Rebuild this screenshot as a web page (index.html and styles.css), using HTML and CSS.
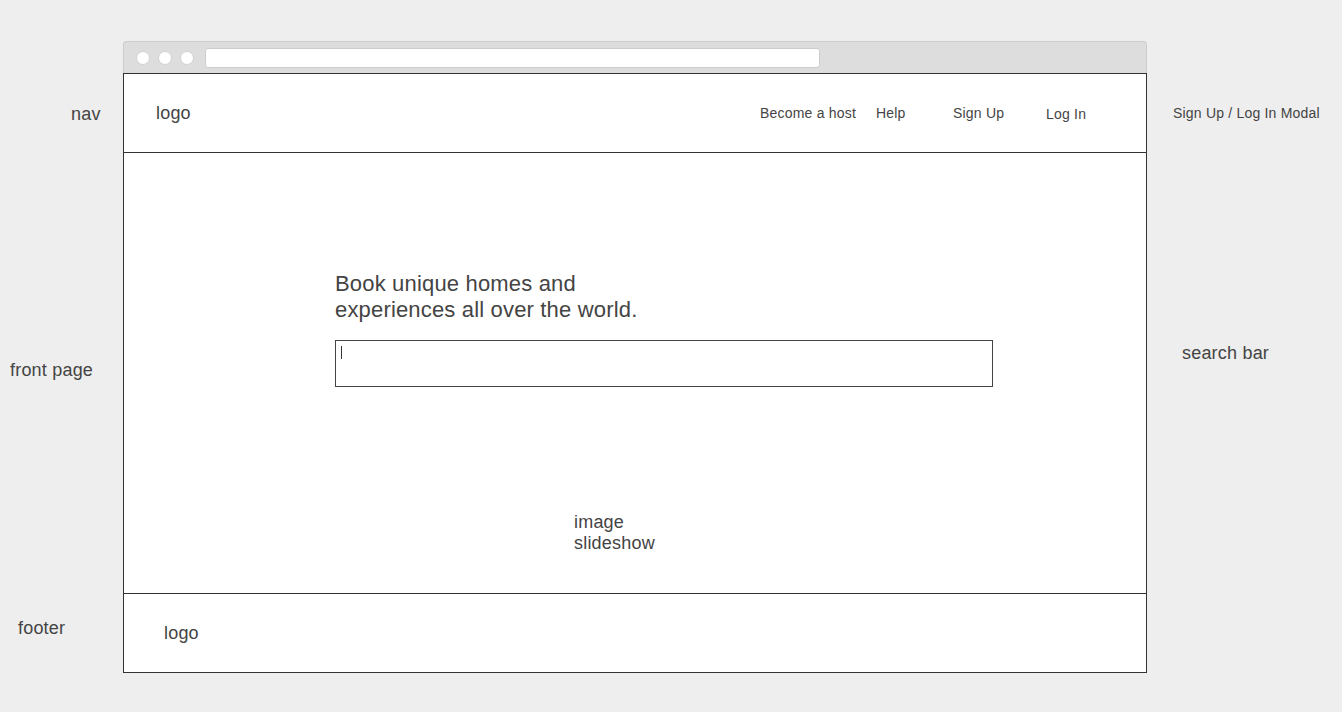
FILE: index.html
```html
<!DOCTYPE html>
<html lang="en">
<head>
<meta charset="utf-8">
<title>Wireframe</title>
<link rel="stylesheet" href="styles.css">
</head>
<body>
<div class="canvas">
  <div class="window">
    <div class="titlebar">
      <span class="dot"></span>
      <span class="dot"></span>
      <span class="dot"></span>
      <span class="address"></span>
    </div>
    <div class="frame">
      <div class="nav">
        <div class="logo">logo</div>
        <div class="links">
          <span class="link">Become a host</span>
          <span class="link">Help</span>
          <span class="link">Sign Up</span>
          <span class="link link-login">Log In</span>
        </div>
      </div>
      <div class="main">
        <h1 class="headline">Book unique homes and<br>experiences all over the world.</h1>
        <div class="search"><span class="cursor"></span></div>
        <div class="slideshow">image slideshow</div>
      </div>
      <div class="footer">
        <div class="logo">logo</div>
      </div>
    </div>
  </div>

  <div class="note note-nav">nav</div>
  <div class="note note-modal">Sign Up / Log In Modal</div>
  <div class="note note-front">front page</div>
  <div class="note note-search">search bar</div>
  <div class="note note-footer">footer</div>
</div>
</body>
</html>
```

FILE: styles.css
```css
* { box-sizing: border-box; }

html, body {
  margin: 0;
  padding: 0;
  background: #eeeeee;
}

body {
  font-family: "Liberation Sans", Arial, sans-serif;
  color: #444444;
  letter-spacing: 0.2px;
}

.canvas {
  position: relative;
  width: 1342px;
  height: 712px;
  overflow: hidden;
  padding-top: 41px;
}

.window {
  margin-left: 123px;
  width: 1024px;
}

.titlebar {
  height: 32px;
  background: #dddddd;
  border: 1px solid #cccccc;
  border-bottom: 0;
  border-radius: 4px 4px 0 0;
  display: flex;
  align-items: center;
  padding-left: 12px;
  gap: 8px;
}

.dot {
  width: 14px;
  height: 14px;
  border-radius: 50%;
  background: #ffffff;
  border: 1px solid #d2d2d2;
}

.address {
  margin-left: 3px;
  width: 615px;
  height: 20px;
  background: #ffffff;
  border: 1px solid #cccccc;
  border-radius: 3px;
}

.frame {
  border: 1px solid #333333;
  background: #ffffff;
}

.nav {
  height: 79px;
  border-bottom: 1px solid #333333;
  display: flex;
  align-items: flex-start;
  padding-left: 32px;
}

.nav .logo {
  margin-top: 29px;
}

.logo {
  font-size: 18px;
  line-height: 21px;
}

.links {
  margin-left: auto;
  margin-top: 31px;
  display: grid;
  grid-template-columns: 116px 77px 93px 100px;
  font-size: 14px;
  line-height: 16px;
  align-items: start;
}

.link-login {
  padding-top: 1px;
}

.main {
  height: 441px;
  border-bottom: 1px solid #333333;
  padding-top: 118px;
}

.headline {
  margin: 0 0 0 211px;
  font-size: 22px;
  line-height: 26px;
  font-weight: normal;
  color: #444444;
  letter-spacing: 0.17px;
}

.search {
  margin: 17px 0 0 211px;
  width: 658px;
  height: 47px;
  border: 1px solid #444444;
  padding: 5px 0 0 5px;
}

.cursor {
  display: block;
  width: 1px;
  height: 13px;
  background: #333333;
}

.slideshow {
  margin: 125px 0 0 450px;
  width: 100px;
  font-size: 18px;
  line-height: 21px;
}

.footer {
  height: 78px;
  padding: 29px 0 0 40px;
}

.note {
  position: absolute;
  font-size: 18px;
  line-height: 21px;
  white-space: nowrap;
}

.note-nav { left: 71px; top: 104px; }
.note-modal { left: 1173px; top: 105px; font-size: 14px; line-height: 16px; }
.note-front { left: 10px; top: 360px; }
.note-search { left: 1182px; top: 343px; }
.note-footer { left: 18px; top: 618px; }
```
